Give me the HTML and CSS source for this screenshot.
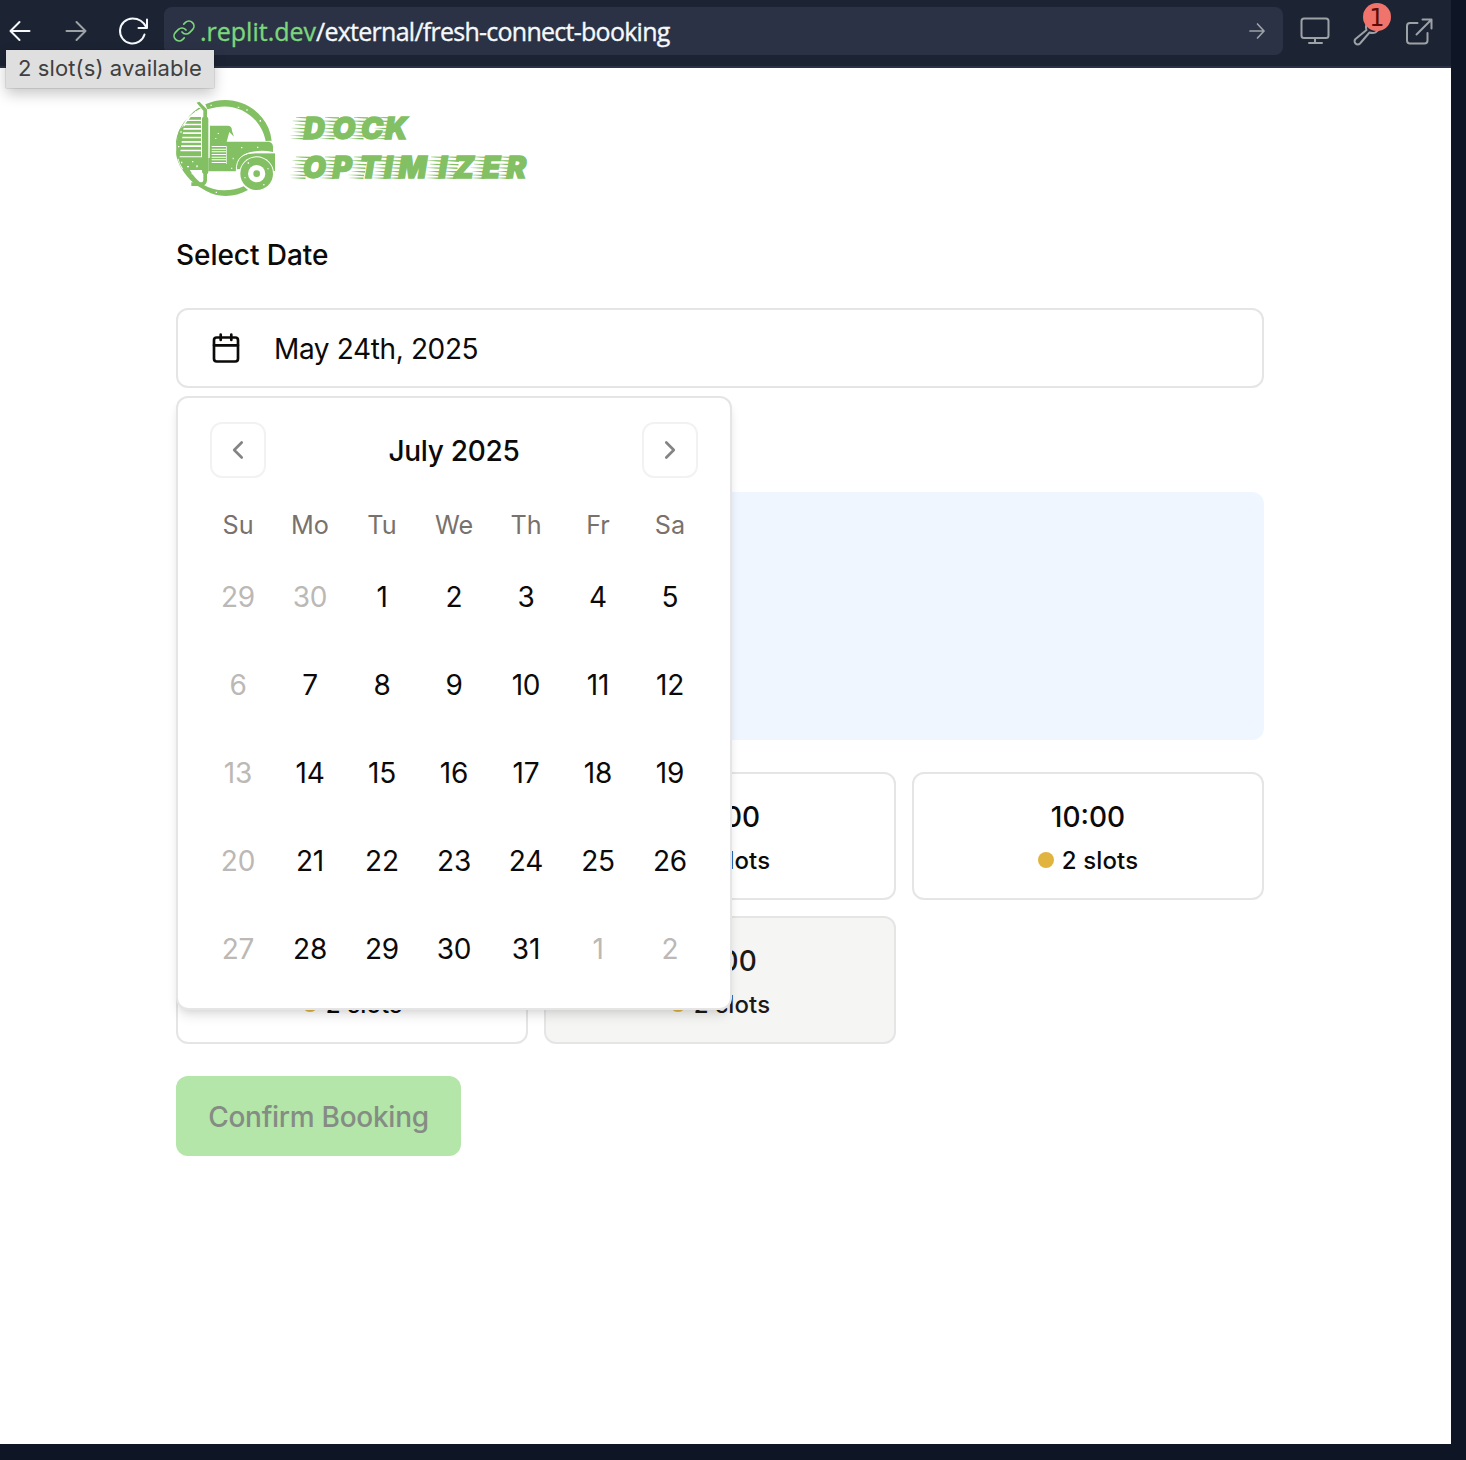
FILE: index.html
```html
<!DOCTYPE html>
<html lang="en">
<head>
<meta charset="utf-8">
<title>Dock Optimizer</title>
<link rel="stylesheet" href="styles.css">
</head>
<body>
<div class="window">
  <header class="toolbar">
    <svg class="icon back" viewBox="0 0 32 32"><path d="M25.500 16H7M15.500 7 6.500 16l9 9"/></svg>
    <svg class="icon forward" viewBox="0 0 32 32"><path d="M6.500 16H25M16.500 7l9 9-9 9"/></svg>
    <svg class="icon reload" viewBox="0 0 32 32"><path d="M30 4.500V13h-8.500M29.500 12.500C26.500 6.500 21.500 3.500 15.500 3.500A12.500 12.500 0 1 0 27.500 19.500"/></svg>
    <div class="address">
      <svg class="link" viewBox="0 0 24 24"><path d="M10 13a5 5 0 0 0 7.540.54l3-3a5 5 0 0 0-7.070-7.070l-1.720 1.710M14 11a5 5 0 0 0-7.540-.54l-3 3a5 5 0 0 0 7.070 7.070l1.710-1.710"/></svg>
      <span class="url"><span class="host">.replit.dev</span>/external/fresh-connect-booking</span>
      <svg class="go" viewBox="0 0 20 20"><path d="M3 10h14M10.500 3l6.500 7-6.500 7"/></svg>
    </div>
    <svg class="icon monitor" viewBox="0 0 32 32"><rect x="2.500" y="3.500" width="27" height="19.500" rx="2.500"/><path d="M16 23v4.500M10 28h13"/></svg>
    <div class="tools">
      <svg class="icon" viewBox="0 0 32 32"><path d="M23 5.500c-5-1-9.500 4-7.500 9.500L4.500 24a3 3 0 0 0 4.500 4.500L18.500 17.500c4.500 1.500 8.500-.5 9.500-4.500"/></svg>
      <span class="badge">1</span>
    </div>
    <svg class="icon external" viewBox="0 0 32 32"><path d="M14.500 8H7a3 3 0 0 0-3 3v14.500a3 3 0 0 0 3 3h14.500a3 3 0 0 0 3-3V18M19.500 4.500h9v9M28 5 13.500 19.500"/></svg>
  </header>

  <main class="page">
    <svg class="logo" viewBox="176 98 354 100">
      <defs>
        <linearGradient id="fade"><stop offset="0" stop-color="#82c063" stop-opacity=".15"/><stop offset=".55" stop-color="#82c063"/></linearGradient>
        <path id="speed" fill="url(#fade)" d="M5 0 19 .2v1.600L5 .7zM1.500 3.500 18 3.800v1.600L1.500 4.200zM4 7.200 17.500 7.400V9L4 7.900zM.5 10.800 16.500 11v1.600L.5 11.500zM2.500 14.400 16 14.600v1.600L2.500 15.100zM-1 18 15 18.200v1.600L-1 18.700zM0 21 14.500 21.100v1.400L0 21.700z"/>
      </defs>
      <g transform="translate(166 90) scale(.33333)">
        <path class="green" d="M118 43C190 10 275 42 307 113Q315 132 317 152L299 153C285 82 218 38 151 52L124 58zM105 55C35 91 8 166 46 236L71 239C92 277 126 300 174 301Q207 301 233 289L246 300C204 325 148 323 112 298 73 277 45 243 35 206 22 144 49 87 98 53z"/>
        <path class="green" d="M36 202H108V240H53Q40 222 36 202M74 81H105V89H68zM64 93H105V101H58zM57 106H105V114H52zM53 119H105V127H48zM49 132H105V140H44zM46 145H105V153H42zM44 158H105V166H40zM42 171H105V179H40zM42 184H105V199H40zM40 120 54 105 40 206H33Q29 150 40 120"/>
        <path class="green" d="M108 87Q108 81 112 80V62L92 38 100 35 123 58V80Q127 82 127 88V246Q126 251 123 253V272Q121 286 106 288H76V277H105Q112 278 112 270V252Q108 249 108 243z"/>
        <path class="green" d="M132 107H187Q198 108 198 123L204 140 190 126 182 155H309Q321 158 321 171V186Q282 178 247 188 216 198 211 244H127V204H131z"/>
        <path class="paper" d="M137 168H181V171H137zM137 176H181V179H137zM137 184H181V187H137zM137 192H181V195H137zM137 200H181V203H137zM137 208H181V211H137zM137 216H181V219H137zM180 168H182V222H180z"/>
        <path class="green" d="M211 238C208 205 235 190 268 190H327V243H322C312 195 240 187 228 237z"/>
        <path class="gap" d="M211 242C209 202 234 188 268 188H326"/>
        <circle class="paper" cx="272" cy="251" r="52"/>
        <circle class="green" cx="272" cy="251" r="49"/>
        <circle class="paper" cx="272" cy="251" r="26"/>
        <circle class="green" cx="272" cy="251" r="10"/>
        <path class="paper" d="M64 75h5v4h-5zM87 64h4v4h-4zM43 124h4v4h-4zM36 168h4v4h-4zM45 215h4v5h-4zM63 228h6v4h-6zM78 213h4v4h-4zM91 226h4v6h-4zM133 44h5v3h-5zM215 50h5v3h-5zM241 58h4v4h-4zM281 90h4v5h-4zM155 129h4v3h-4zM148 144h3v3h-3zM225 171h4v4h-4zM273 170h4v4h-4zM200 203h3v5h-3zM195 233h4v3h-4zM77 249h4v4h-4zM149 305h4v4h-4zM245 217h4v4h-4zM291 283h5v3h-5zM304 235h4v3h-4zM235 262h4v3h-4z"/>
      </g>
      <use href="#speed" x="291" y="117"/><use href="#speed" x="320" y="117"/><use href="#speed" x="349" y="117"/><use href="#speed" x="374" y="117"/>
      <use href="#speed" x="291" y="156.500"/><use href="#speed" x="320" y="156.500"/><use href="#speed" x="349" y="156.500"/><use href="#speed" x="372" y="156.500"/><use href="#speed" x="386" y="156.500"/><use href="#speed" x="426" y="156.500"/><use href="#speed" x="441" y="156.500"/><use href="#speed" x="470" y="156.500"/><use href="#speed" x="495" y="156.500"/>
      <text class="brand" y="138.700" x="303.500 332.500 361 385">DOCK</text>
      <text class="brand" y="178.300" x="303 332.500 359.500 384 398.500 438.500 453.500 482 506.500">OPTIMIZER</text>
    </svg>

    <h2 class="label">Select Date</h2>
    <div class="picker">
      <button class="field">
        <svg class="calendar-icon" viewBox="0 0 32 32"><rect x="4" y="5.500" width="24" height="24" rx="2.700"/><path d="M10.700 2.700V8M21.300 2.700V8M4 13.300h24"/></svg>
        <span class="date">May 24th, 2025</span>
      </button>
      <section class="popover">
        <div class="month">
          <button class="step"><svg viewBox="0 0 24 24"><path d="M15.700 4.500 8.200 12l7.500 7.500"/></svg></button>
          <span>July 2025</span>
          <button class="step"><svg viewBox="0 0 24 24"><path d="m8.300 4.500 7.500 7.500-7.500 7.500"/></svg></button>
        </div>
        <div class="weekdays"><span>Su</span><span>Mo</span><span>Tu</span><span>We</span><span>Th</span><span>Fr</span><span>Sa</span></div>
        <div class="days">
          <span class="off">29</span><span class="off">30</span><span>1</span><span>2</span><span>3</span><span>4</span><span>5</span>
          <span class="off">6</span><span>7</span><span>8</span><span>9</span><span>10</span><span>11</span><span>12</span>
          <span class="off">13</span><span>14</span><span>15</span><span>16</span><span>17</span><span>18</span><span>19</span>
          <span class="off">20</span><span>21</span><span>22</span><span>23</span><span>24</span><span>25</span><span>26</span>
          <span class="off">27</span><span>28</span><span>29</span><span>30</span><span>31</span><span class="off">1</span><span class="off">2</span>
        </div>
      </section>
    </div>

    <div class="notice"></div>
    <div class="slots">
      <div class="slot"></div>
      <div class="slot"><b>09:00</b><span class="count">2 slots</span></div>
      <div class="slot"><b>10:00</b><span class="count">2 slots</span></div>
      <div class="slot"><b></b><span class="count">2 slots</span></div>
      <div class="slot hovered"><b>15:00</b><span class="count">2 slots</span></div>
    </div>
    <button class="confirm">Confirm Booking</button>
  </main>
  <div class="tooltip">2 slot(s) available</div>
</div>
</body>
</html>
```
FILE: styles.css
```css
* { box-sizing: border-box; }
body {
  margin: 0;
  height: 1460px;
  background: #0e1525;
  color: #0c0a09;
  font-family: Inter, "Liberation Sans", sans-serif;
  font-size: 28px;
  overflow: hidden;
}
button { font: inherit; color: inherit; margin: 0; }
svg { flex: none; fill: none; stroke-linecap: round; stroke-linejoin: round; }

.window { position: relative; width: 1451px; height: 1444px; background: #fff; }

.toolbar {
  display: flex;
  align-items: center;
  height: 68px;
  padding: 7px 16px 11px 4px;
  background: #1c2333;
  border-bottom: 2px solid #2b3245;
}
.icon { width: 32px; height: 32px; stroke: #9da2a6; stroke-width: 2; display: block; }
.back, .reload { stroke: #f5f9fc; }
.forward { margin-left: 24px; }
.reload { margin: 0 15px 0 25px; }
.address {
  display: flex;
  align-items: center;
  width: 1119px;
  height: 48px;
  padding: 0 16px 0 8px;
  border-radius: 8px;
  background: #2b3245;
}
.link { width: 24px; height: 24px; stroke: #7cd67c; stroke-width: 1.7; }
.url {
  flex: 1;
  margin-left: 4px;
  color: #f5f9fc;
  font: 25px/48px "Open Sans", "Noto Sans", sans-serif;
  -webkit-text-stroke: 0.35px currentColor;
  letter-spacing: -0.74px;
  white-space: nowrap;
}
.host { color: #7cd67c; letter-spacing: 0; }
.go { width: 20px; height: 20px; stroke: #9da2a6; stroke-width: 1.7; }
.monitor { margin-left: 16px; }
.tools { position: relative; margin: 0 20px; }
.badge {
  position: absolute;
  left: 12px;
  top: -12px;
  width: 28px;
  height: 28px;
  border-radius: 50%;
  background: #f0736c;
  color: #5c0c05;
  font: 24px/30px "DejaVu Sans", sans-serif;
  text-align: center;
}
.tooltip {
  position: absolute;
  left: 6px;
  top: 50px;
  width: 208px;
  height: 38px;
  background: #dfdfdf;
  box-shadow: 0 0 1px rgba(0,0,0,.5), 0 6px 14px rgba(0,0,0,.22);
  color: #404040;
  font-size: 22px;
  line-height: 37px;
  letter-spacing: 0.1px;
  text-align: center;
  white-space: nowrap;
}

.page { width: 1088px; margin-left: 176px; padding-top: 30px; }
.logo { display: block; width: 354px; height: 100px; }
.green { fill: #82c063; }
.paper { fill: #fff; }
.gap { stroke: #fff; stroke-width: 3px; }
.brand { font: italic 900 29.5px Inter, sans-serif; fill: #82c063; stroke: #82c063; stroke-width: 1.3px; stroke-linejoin: miter; }

.label { margin: 36px 0; height: 38px; font-size: 28px; line-height: 42px; font-weight: 500; letter-spacing: -0.05px; }
.picker { position: relative; }
.field {
  display: flex;
  align-items: center;
  gap: 32px;
  width: 100%;
  height: 80px;
  padding: 0 32px;
  border: 2px solid #e5e5e5;
  border-radius: 12px;
  background: #fff;
}
.date { padding-top: 1px; letter-spacing: -0.37px; }
.calendar-icon { width: 32px; height: 32px; stroke: #0c0a09; stroke-width: 2.67; }
.popover {
  position: absolute;
  z-index: 1;
  top: 88px;
  left: 0;
  width: 556px;
  height: 614px;
  padding: 24px;
  border: 2px solid #e5e5e5;
  border-radius: 12px;
  background: #fff;
  box-shadow: 0 8px 12px -2px rgba(0,0,0,.1), 0 4px 8px -4px rgba(0,0,0,.1);
}
.month {
  display: flex;
  align-items: center;
  justify-content: space-between;
  padding: 0 8px;
  font-weight: 500;
}
.month > span { padding-top: 2px; letter-spacing: -0.3px; }
.step {
  display: grid;
  place-items: center;
  width: 56px;
  height: 56px;
  padding: 0;
  border: 2px solid #f2f2f2;
  border-radius: 12px;
  background: #fff;
}
.step svg { width: 24px; height: 24px; stroke: #858484; stroke-width: 2.67; }
.weekdays, .days { display: grid; grid-template-columns: repeat(7, 72px); text-align: center; }
.weekdays { margin: 28px 0 16px; color: #78716c; font-size: 25.2px; line-height: 38px; }
.days { row-gap: 16px; line-height: 72px; padding-top: 1px; letter-spacing: -0.2px; }
.off { color: #bbb8b5; }

.notice { height: 248px; margin-top: 104px; border-radius: 12px; background: #eff6ff; }
.slots { display: grid; grid-template-columns: repeat(3, 352px); gap: 16px; margin: 32px 0; }
.slot {
  display: flex;
  flex-direction: column;
  align-items: center;
  height: 128px;
  padding-top: 22px;
  border: 2px solid #e5e5e5;
  border-radius: 12px;
}
.slot b { height: 40px; font-weight: 500; line-height: 42px; }
.hovered { background: #f5f5f4; color: #1c1917; }
.count { display: flex; align-items: flex-start; gap: 8px; height: 32px; margin-top: 8px; font-size: 24px; line-height: 34px; font-weight: 500; letter-spacing: 0.15px; }
.count::before { content: ""; width: 16px; height: 16px; margin-top: 8px; border-radius: 50%; background: #e0b43f; }
.confirm {
  width: 285px;
  height: 80px;
  padding: 2px 0 0;
  border: 0;
  border-radius: 12px;
  background: #b3e6a8;
  color: #858c84;
  font-weight: 500;
  letter-spacing: -0.27px;
}
```
